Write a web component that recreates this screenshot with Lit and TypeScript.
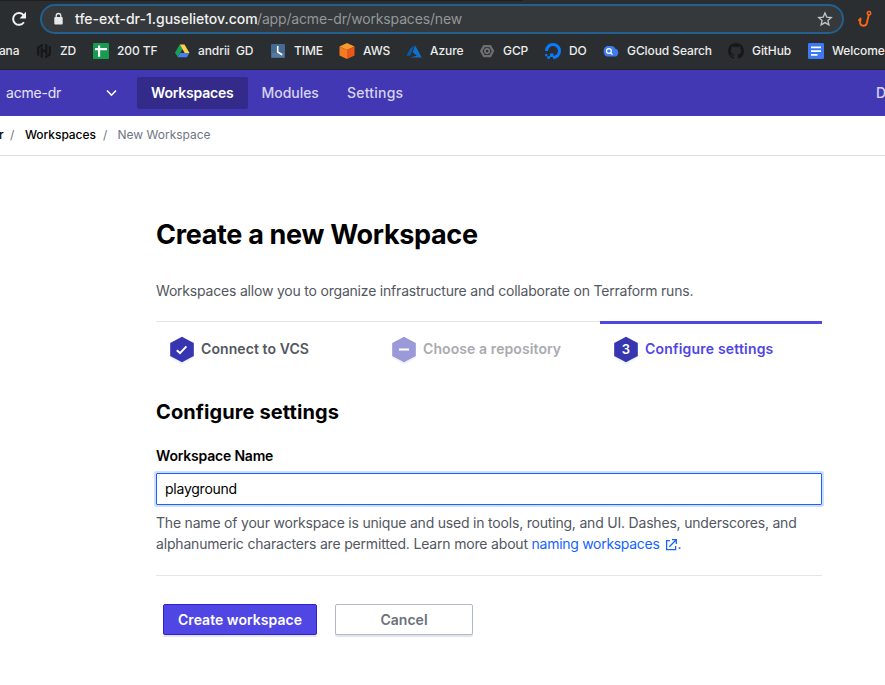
import { LitElement, html, svg, css } from "lit";
import { customElement, property } from "lit/decorators.js";

const bookmarkIcons = {
  hashi: svg`<g fill="#15171a"><path d="M6.800 .5 1 4v8l2.300 1.300V5.300l3.500-2zM9.200 .5v6.200H6.800V4L4.600 5.200v8.900l2.200 1.400V9.300h2.400v2.800l2.200-1.300V1.800z"/><path d="m12.700 2.600 2.300 1.400v8l-5.800 3.500v-2.700l3.500-2.100z"/></g>`,
  sheets: svg`<rect width="16" height="16" rx="1.200" fill="#189a50"/><path d="M6.100 2.500v11.300M2 6.100h12" stroke="#fff" stroke-width="2.100"/>`,
  drive: svg`<path fill="#1a9f57" d="M5.700 1.500h.1L8.500 6 3.800 14 1 9.700z"/><path fill="#ffcf48" d="M5.800 1.500h4.700l5 8.500h-4.800z"/><path fill="#4280f0" d="M6.200 10h9.300l-2.700 4.300H3.600z"/>`,
  clock: svg`<rect x="1" y="1" width="14" height="14" rx="1" fill="#456b94"/><path d="M2 10h12v4H2z" fill="#55799f"/><path d="M7.700 3v6l4.500 2.700" fill="none" stroke="#fff" stroke-width="1.600"/>`,
  aws: svg`<path fill="#f9992f" d="m8 0 7.500 3.500L8 7 .5 3.500z"/><path fill="#f47b20" d="M.5 3.500 8 7v9L.5 12.500z"/><path fill="#e9571b" d="M15.500 3.500 8 7v9l7.500-3.500z"/>`,
  azure: svg`<path fill="#0c5aa5" d="M8.600 2 4.200 5.800.5 12.800h3.600z"/><path fill="#0f71ca" d="m9.200 2.500-2.600 6.800 4.300 3.400-7 1.700h11.800z"/>`,
  gcp: svg`<path fill="none" stroke="#6d6e70" stroke-width="2.300" d="M5 3.100h6.200L14 8.100l-2.800 5H5L2.200 8.100z"/><circle cx="8.100" cy="8.100" r="2.200" fill="none" stroke="#737476" stroke-width="1.700"/>`,
  ocean: svg`<path fill="none" stroke="#087cff" stroke-width="3" d="M1.500 8A6.500 6.500 0 1 1 8 14.500"/><path fill="#087cff" d="M5 10.500h3.500V14H5zM2.300 13.200h2.700v2.500H2.300zM.2 11h2.100v2.200H.2z"/>`,
  cloud: svg`<path fill="#3f7ced" d="M5 3h3c2.300 0 3.500 1 4.200 2.400 2.200.6 3.100 2.200 3.100 4 0 2.500-1.500 4.200-3.700 4.200H5C2.500 13.600.6 11.200.6 8.300S2.500 3 5 3z"/><circle cx="5.900" cy="8" r="2.400" fill="none" stroke="#fff" stroke-width="1.200"/><path d="m7.600 9.700 1.900 1.900" stroke="#fff" stroke-width="1.300"/>`,
  github: svg`<path fill="#161719" d="M8 0C3.580 0 0 3.580 0 8c0 3.540 2.290 6.530 5.470 7.590.4.070.55-.17.55-.38 0-.19-.01-.82-.01-1.490-2.010.37-2.530-.49-2.690-.94-.09-.23-.48-.94-.82-1.130-.28-.15-.68-.52-.01-.53.63-.01 1.080.58 1.230.82.72 1.210 1.870.87 2.330.66.07-.52.28-.87.51-1.070-1.780-.2-3.640-.89-3.640-3.950 0-.87.31-1.590.82-2.150-.08-.2-.36-1.020.08-2.120 0 0 .67-.21 2.200.82.64-.18 1.320-.27 2-.27s1.360.09 2 .27c1.530-1.040 2.200-.82 2.200-.82.44 1.100.16 1.920.08 2.120.51.56.82 1.270.82 2.150 0 3.070-1.870 3.750-3.650 3.950.29.25.54.73.54 1.480 0 1.070-.01 1.930-.01 2.200 0 .21.15.46.55.38A8.010 8.010 0 0 0 16 8c0-4.420-3.580-8-8-8z"/>`,
  docs: svg`<rect width="16" height="16" rx="1.200" fill="#3c79f2"/><path stroke="#fff" stroke-width="1.900" d="M3 4.400h10M3 8.100h10M3 11.900h6.500"/>`,
};

type IconName = keyof typeof bookmarkIcons;

const bookmarks: { label: string; icon: IconName }[] = [
  { label: "ZD", icon: "hashi" },
  { label: "200 TF", icon: "sheets" },
  { label: "andrii  GD", icon: "drive" },
  { label: "TIME", icon: "clock" },
  { label: "AWS", icon: "aws" },
  { label: "Azure", icon: "azure" },
  { label: "GCP", icon: "gcp" },
  { label: "DO", icon: "ocean" },
  { label: "GCloud Search", icon: "cloud" },
  { label: "GitHub", icon: "github" },
  { label: "Welcome", icon: "docs" },
];

@customElement("browser-chrome")
class BrowserChrome extends LitElement {
  static styles = css`
    :host { display: block; height: 70px; box-sizing: border-box; overflow: hidden; background: #2b2e31; border-bottom: 1px solid #202226; color: #eceded; }
    svg { display: block; flex: none; }
    .edge { height: 1px; width: 523px; background: #1d1f21; }
    .bar { display: flex; align-items: center; height: 36px; }
    .reload { margin-left: 11px; }
    .address { display: flex; align-items: center; box-sizing: border-box; width: 804px; height: 30px; margin-left: 13px; padding: 0 9px 0 11px; border: 2px solid #22608f; border-radius: 15px; background: #35393b; font-size: 14px; line-height: 20px; flex: none; }
    .host { margin-left: 10px; width: 182px; font-weight: 500; white-space: nowrap; color: #f1f2f2; }
    .path { flex: 1; color: #94979a; letter-spacing: -0.156px; white-space: nowrap; }
    .hook { margin-left: 13px; }
    .marks { display: grid; grid-template-columns: 36px 57px 81px 96px 69px 67px 73px 66px 58px 125px 80px 90px; align-items: center; height: 28px; font-size: 12px; line-height: 16px; font-weight: 500; letter-spacing: -0.09px; }
    .mark { display: flex; align-items: center; gap: 8px; white-space: pre; }
    .cut { margin-left: -1px; letter-spacing: -0.2px; }
  `;

  render() {
    return html`
      <div class="edge"></div>
      <div class="bar">
        <svg class="reload" width="16" height="16" viewBox="0 0 16 16"><path d="M12.900 11.200A5.900 5.900 0 1 1 12.700 4.300" fill="none" stroke="#eff0f0" stroke-width="2"/><path d="M15 .8v6.600H8.600z" fill="#eff0f0"/></svg>
        <div class="address">
          <svg width="12" height="14" viewBox="0 0 12 14"><path d="M3.200 6V3.800a2.300 2.300 0 0 1 4.600 0V6" fill="none" stroke="#e7e9ea" stroke-width="1.300"/><rect x="1.300" y="5" width="8.400" height="7.500" rx="1" fill="#e7e9ea"/></svg>
          <span class="host">tfe-ext-dr-1.guselietov.com</span><span class="path">/app/acme-dr/workspaces/new</span>
          <svg width="16" height="16" viewBox="0 0 16 16"><path d="m8 1.900 1.800 4.200 4.500.4-3.400 3 1 4.400L8 11.600l-3.900 2.300 1-4.400-3.400-3 4.500-.4z" fill="none" stroke="#c3c6c8" stroke-width="1.300"/></svg>
        </div>
        <svg class="hook" width="16" height="18" viewBox="0 0 16 18"><circle cx="12" cy="3.200" r="1.700" fill="none" stroke="#ff6512" stroke-width="1.500"/><path d="M11.700 5 9.800 13.200a3.500 3.500 0 0 1-6.800-.4L3.600 8.700M2 10.200l1.600-1.800" fill="none" stroke="#ff6512" stroke-width="1.900" stroke-linecap="round"/></svg>
      </div>
      <div class="marks">
        <span class="cut">ana</span>
        ${bookmarks.map(b => html`<span class="mark"><svg width="16" height="16" viewBox="0 0 16 16">${bookmarkIcons[b.icon]}</svg><span>${b.label}</span></span>`)}
      </div>
    `;
  }
}

@customElement("step-item")
class StepItem extends LitElement {
  @property() label = "";
  @property() mark = "";
  @property({ reflect: true }) state = "";

  static styles = css`
    :host { display: flex; box-sizing: border-box; height: 56px; padding: 14px 0 0 13px; border-top: 1px solid #e4e5e9; color: #525761; }
    :host([state="skipped"]) { color: #a9abb0; }
    :host([state="current"]) { border-top: 3px solid #5046e4; padding-top: 12px; color: #5046e4; }
    svg { flex: none; margin-right: 6px; }
    .hex { fill: #3735b0; }
    .halo { fill: #eef4ff; }
    :host([state="skipped"]) .hex { fill: #9b99d8; }
    .glyph { fill: none; stroke: #fff; stroke-width: 2; }
    .num { fill: #fff; font: 600 13px Inter, sans-serif; text-anchor: middle; }
    .label { font-size: 14px; font-weight: 600; line-height: 25px; letter-spacing: 0.09px; white-space: nowrap; }
    :host([state="current"]) .label { letter-spacing: 0.19px; }
  `;

  render() {
    const glyph = this.mark === "check" ? svg`<path class="glyph" d="m7.800 14.200 3.200 2.900 6.400-6.700"/>`
      : this.mark === "minus" ? svg`<path class="glyph" d="M8 13.500h10"/>`
      : svg`<text class="num" x="13" y="18">${this.mark}</text>`;
    return html`
      <svg width="26" height="29" viewBox="0 0 26 29">
        <path class="halo" d="M13 2.500 25 9v13L13 28.500 1 22V9z"/>
        <path class="hex" d="M13 .7 24.800 7v13L13 26.300 1.200 20V7z"/>
        ${glyph}
      </svg>
      <span class="label">${this.label}</span>
    `;
  }
}

@customElement("app-root")
class AppRoot extends LitElement {
  static styles = css`
    :host { display: block; width: 885px; height: 685px; overflow: hidden; background: #fff; color: #000; font-family: Inter, "Liberation Sans", sans-serif; font-size: 14px; }
    .nav { display: flex; align-items: center; height: 46px; background: #4338b3; color: #d6d4f0; font-weight: 500; line-height: 32px; overflow: hidden; white-space: nowrap; }
    .org { width: 100px; padding-left: 6px; font-weight: 400; letter-spacing: -0.2px; color: #e6e4f6; flex: none; }
    .chevron { width: 11px; height: 8px; margin-right: 20px; flex: none; }
    .tab { width: 111px; height: 32px; box-sizing: border-box; padding-left: 14px; border-radius: 2px; background: #332a89; color: #fff; font-weight: 600; letter-spacing: -0.2px; }
    .modules { width: 85.500px; margin-left: 13.500px; letter-spacing: -0.04px; }
    .settings { flex: 1; letter-spacing: 0.22px; }
    .account { width: 9px; }
    .crumbs { display: flex; align-items: center; box-sizing: border-box; height: 40px; padding-bottom: 2px; border-bottom: 1px solid #dcdee5; font-size: 12px; font-weight: 500; letter-spacing: -0.06px; white-space: nowrap; }
    .tail { width: 11px; margin-left: -1px; }
    .slash { width: 15px; color: #6f7682; font-weight: 400; }
    .here { width: 78px; }
    .slash.wide { width: 14.500px; }
    .new { color: #6f7682; font-weight: 400; letter-spacing: 0; }
    .page { width: 666px; margin-left: 156px; padding-top: 59px; }
    h1 { margin: 0; font-size: 27px; line-height: 40px; font-weight: 700; letter-spacing: -0.32px; }
    .intro { margin: 26px 0 0; line-height: 20px; letter-spacing: -0.2px; color: #525761; white-space: nowrap; }
    .steps { display: grid; grid-template-columns: repeat(3, 222px); margin-top: 20px; }
    h2 { margin: 21px 0 0; font-size: 20px; line-height: 28px; font-weight: 700; letter-spacing: 0.1px; }
    .field { display: block; margin-top: 20px; font-weight: 600; line-height: 20px; letter-spacing: -0.2px; }
    .input { margin-top: 7px; height: 32px; box-sizing: border-box; padding-left: 8px; border: 1px solid #1563ff; border-radius: 1px; box-shadow: 0 0 0 2px #d0dffd; line-height: 30px; letter-spacing: -0.24px; }
    .help { margin: 7px 0 0; padding-bottom: 21px; border-bottom: 1px solid #e4e5e9; color: #525761; line-height: 21px; letter-spacing: -0.2px; white-space: nowrap; }
    .more { letter-spacing: -0.18px; }
    .link { color: #1563ff; letter-spacing: -0.29px; }
    .ext { margin: 0 1px 0 5px; vertical-align: -2px; }
    .actions { display: flex; gap: 18px; margin: 28px 0 0 7px; }
    .button { height: 31px; box-sizing: border-box; border-radius: 2px; text-align: center; line-height: 30px; font-weight: 600; box-shadow: 0 2px 1px #e1e4e9; letter-spacing: 0.03px; }
    .primary { width: 154px; border: 1px solid #2e20d6; background: #5046e4; color: #fff; }
    .cancel { width: 138px; border: 1px solid #b3b9c8; color: #6b717c; background: #fff; }
  `;

  render() {
    return html`
      <browser-chrome></browser-chrome>
      <nav class="nav">
        <span class="org">acme-dr</span>
        <svg class="chevron" viewBox="0 0 11 8"><path d="m1 1.500 4.500 4.700L10 1.500" fill="none" stroke="#fff" stroke-width="1.600"/></svg>
        <span class="tab">Workspaces</span>
        <span class="modules">Modules</span>
        <span class="settings">Settings</span>
        <span class="account">D</span>
      </nav>
      <div class="crumbs">
        <span class="tail">r</span><span class="slash">/</span><span class="here">Workspaces</span><span class="slash wide">/</span><span class="new">New Workspace</span>
      </div>
      <main class="page">
        <h1>Create a new Workspace</h1>
        <p class="intro">Workspaces allow you to organize infrastructure and collaborate on Terraform runs.</p>
        <div class="steps">
          <step-item label="Connect to VCS" mark="check" state="done"></step-item>
          <step-item label="Choose a repository" mark="minus" state="skipped"></step-item>
          <step-item label="Configure settings" mark="3" state="current"></step-item>
        </div>
        <h2>Configure settings</h2>
        <span class="field">Workspace Name</span>
        <div class="input">playground</div>
        <p class="help">The name of your workspace is unique and used in tools, routing, and UI. Dashes, underscores, and<br><span class="more">alphanumeric characters are permitted. Learn more about <span class="link">naming workspaces<svg class="ext" width="12" height="12" viewBox="0 0 12 12"><path d="M5 1.600H1.600v9h9V7M7 .7h4.300V5M11 1 4.300 7.700" fill="none" stroke="#1563ff" stroke-width="1.300"/></svg></span>.</span></p>
        <div class="actions">
          <div class="button primary">Create workspace</div>
          <div class="button cancel">Cancel</div>
        </div>
      </main>
    `;
  }
}
